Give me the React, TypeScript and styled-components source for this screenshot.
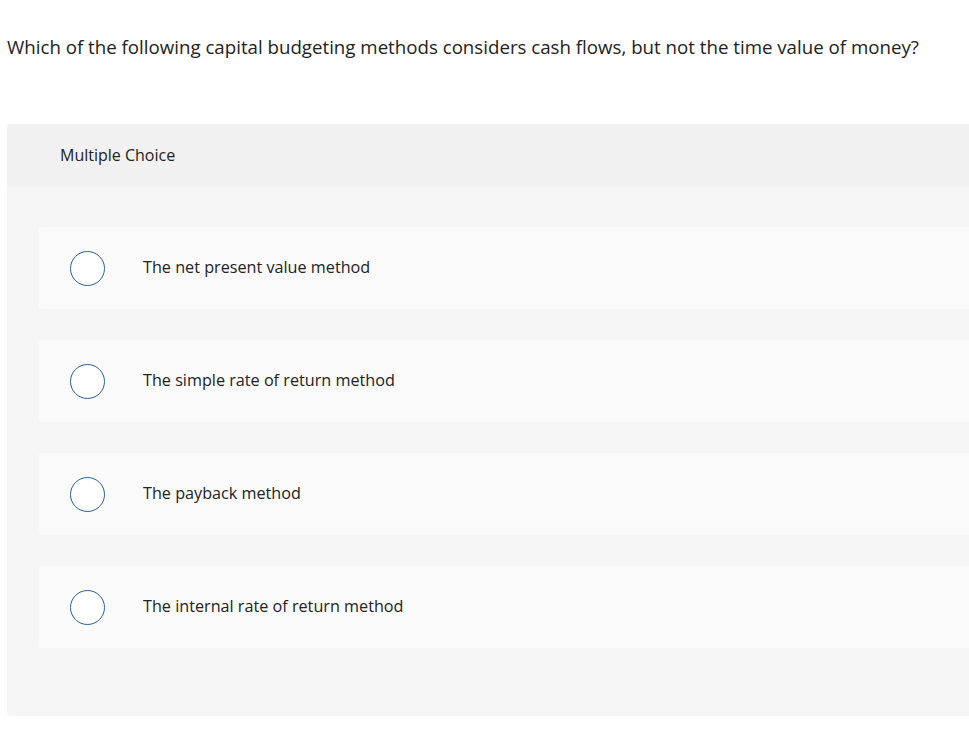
import styled, { createGlobalStyle } from "styled-components";

const options = [
  "The net present value method",
  "The simple rate of return method",
  "The payback method",
  "The internal rate of return method",
];

const GlobalStyle = createGlobalStyle`
  html, body {
    margin: 0;
    padding: 0;
    background: #fff;
    overflow: hidden;
  }
  body {
    font-family: "Open Sans", Lato, Arial, sans-serif;
    color: #222;
  }
`;

const App = () => (
  <>
    <GlobalStyle />
    <Page>
      <Question>
        Which of the following capital budgeting methods considers cash flows,
        but not the time value of money?
      </Question>
      <Panel>
        <PanelHeader>Multiple Choice</PanelHeader>
        <Choices>
          {options.map((text, i) => (
            <Choice key={i}>
              <Radio />
              <Label>{text}</Label>
            </Choice>
          ))}
        </Choices>
      </Panel>
    </Page>
  </>
);

const Page = styled.div`
  width: 1010px;
  padding: 0 0 0 7px;
`;

const Question = styled.p`
  margin: 0;
  padding-top: 34px;
  height: 124px;
  box-sizing: border-box;
  font-size: 18.7px;
  line-height: 26px;
  white-space: nowrap;
`;

const Panel = styled.div`
  background: #f5f5f5;
  border-radius: 3px 0 0 3px;
`;

const PanelHeader = styled.div`
  display: flex;
  align-items: center;
  height: 62px;
  padding-left: 53px;
  background: #f1f1f1;
  font-size: 16px;
  border-radius: 3px 0 0 0;
`;

const Choices = styled.div`
  display: flex;
  flex-direction: column;
  gap: 31px;
  padding: 41px 0 68px 32px;
`;

const Choice = styled.div`
  display: flex;
  align-items: center;
  height: 82px;
  padding-left: 31px;
  background: #fafafa;
  border-radius: 3px;
`;

const Radio = styled.span`
  box-sizing: border-box;
  width: 35px;
  height: 35px;
  border: 1.5px solid #2d5f91;
  border-radius: 50%;
  background: #fff;
  flex-shrink: 0;
`;

const Label = styled.span`
  margin-left: 38px;
  padding-bottom: 2px;
  font-size: 16.2px;
`;

export default App;
